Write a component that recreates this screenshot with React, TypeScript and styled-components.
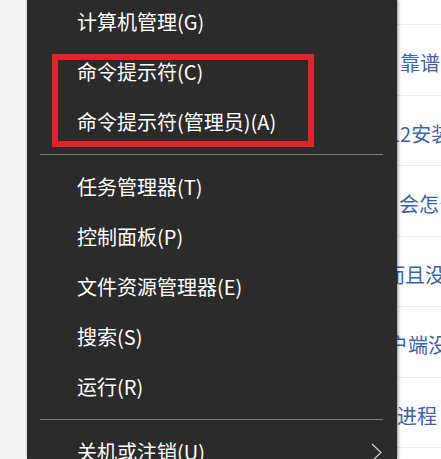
import React from 'react';
import styled, { createGlobalStyle } from 'styled-components';

const GlobalStyle = createGlobalStyle`
  html, body {
    margin: 0;
    padding: 0;
    background: #f3f3f3;
  }
  body {
    font-family: "Noto Sans CJK SC", "Noto Sans", sans-serif;
  }
`;

const Page = styled.div`
  display: flex;
  width: 441px;
  height: 459px;
  overflow: hidden;
  background: #f3f3f3;
`;

const Gutter = styled.div`
  width: 27px;
  flex-shrink: 0;
  background: #f3f3f3;
`;

const Menu = styled.div`
  position: relative;
  z-index: 2;
  width: 370px;
  flex-shrink: 0;
  background: #2b2b2b;
  box-shadow: 1px 0 3px rgba(0, 0, 0, 0.45);
`;

const MenuList = styled.div`
  margin-top: -3px;
`;

const MenuItem = styled.div`
  display: flex;
  align-items: center;
  justify-content: space-between;
  height: 50px;
  padding: 0 15px 0 50px;
  color: #ffffff;
  font-size: 20px;
  line-height: 50px;
  white-space: nowrap;
`;

const Separator = styled.div`
  height: 15px;
  padding: 7px 14px 0 13px;
  box-sizing: border-box;

  &::after {
    content: '';
    display: block;
    height: 1px;
    background: #7c7c7c;
  }
`;

const Highlight = styled.div`
  position: relative;

  &::after {
    content: '';
    position: absolute;
    left: 25px;
    right: 83px;
    top: 7px;
    bottom: 0;
    border: 6px solid #e4222b;
    pointer-events: none;
  }
`;

const Chevron = styled.svg`
  width: 11px;
  height: 19px;
  flex-shrink: 0;
`;

const Results = styled.div`
  flex: 1;
  min-width: 0;
  overflow: hidden;
  background: #ffffff;
  padding-top: 24px;
`;

const ResultRow = styled.div<{ $shift: number }>`
  height: 70.5px;
  box-sizing: border-box;
  border-top: 1px solid #ececec;
  padding: 23px 0 0 3px;
  text-indent: ${p => p.$shift}px;
  color: #3a62ad;
  font-size: 20px;
  line-height: 30px;
  white-space: nowrap;
`;

const topItems = ['计算机管理(G)'];
const highlighted = ['命令提示符(C)', '命令提示符(管理员)(A)'];
const middleItems = ['任务管理器(T)', '控制面板(P)', '文件资源管理器(E)', '搜索(S)', '运行(R)'];

const results = [
  { text: '靠谱吗', shift: 0 },
  { text: '12安装', shift: -11 },
  { text: '会怎么', shift: -1 },
  { text: '而且没', shift: -15 },
  { text: '户端没', shift: -12 },
  { text: '进程', shift: -3 },
  { text: '', shift: 0 },
];

const App: React.FC = () => {
  return (
    <>
      <GlobalStyle />
      <Page>
        <Gutter />
        <Menu>
          <MenuList>
            {topItems.map(t => (
              <MenuItem key={t}>{t}</MenuItem>
            ))}
            <Highlight>
              {highlighted.map(t => (
                <MenuItem key={t}>{t}</MenuItem>
              ))}
            </Highlight>
            <Separator />
            {middleItems.map(t => (
              <MenuItem key={t}>{t}</MenuItem>
            ))}
            <Separator />
            <MenuItem>
              <span>关机或注销(U)</span>
              <Chevron viewBox="0 0 11 19">
                <polyline points="1,1 10,9.5 1,18" fill="none" stroke="#d0d0d0" strokeWidth="1.2" />
              </Chevron>
            </MenuItem>
          </MenuList>
        </Menu>
        <Results>
          {results.map((r, i) => (
            <ResultRow key={i} $shift={r.shift}>
              {r.text}
            </ResultRow>
          ))}
        </Results>
      </Page>
    </>
  );
};

export default App;
